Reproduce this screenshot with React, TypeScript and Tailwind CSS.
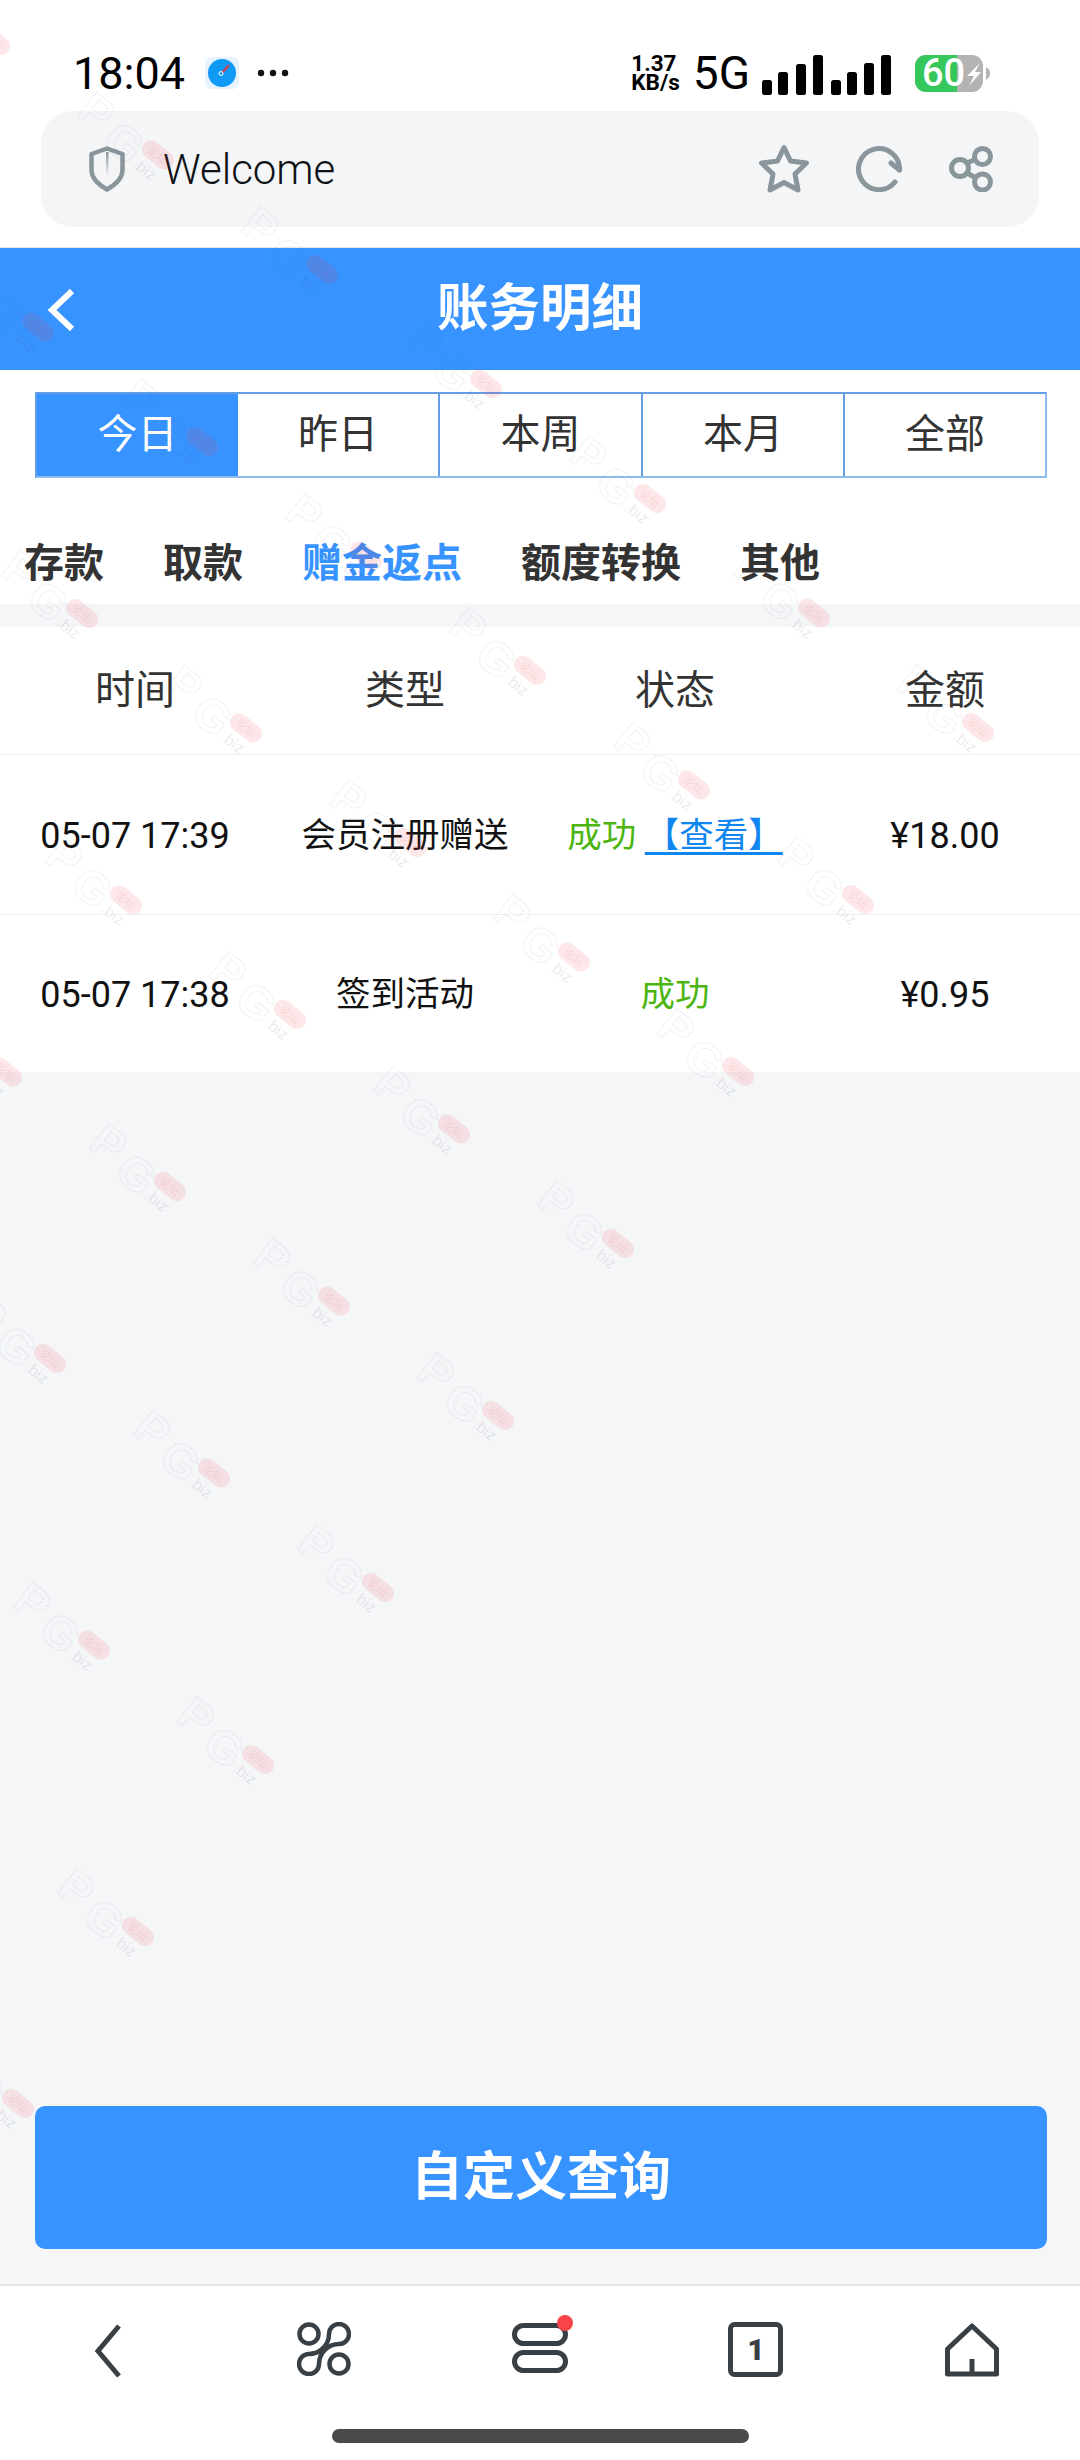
import React from "react";

const wmPoints: { x: number; y: number }[] = [];
for (let j = 0; j <= 8; j++) {
  for (let i = -1; i <= 5; i++) {
    const x = 158 + 164 * i - 120 * j;
    const y = 155 + 114.5 * i + 172 * j;
    if (x > -50 && x < 1130 && y > 0) wmPoints.push({ x, y });
  }
}

function Watermarks() {
  const stroke = "rgba(80,80,120,0.14)";
  return (
    <svg className="absolute left-0 top-0 pointer-events-none" width="1080" height="2460">
      {wmPoints.map((p, k) => (
        <g key={k} transform={`translate(${p.x} ${p.y}) rotate(38)`}>
          <text x="-90" y="20" fontFamily="Liberation Sans" fontWeight="700" fontSize="46" fill="none" stroke={stroke} strokeWidth="1.4" strokeDasharray="1.2 1.2">P</text>
          <text x="-52" y="27" fontFamily="Liberation Sans" fontWeight="700" fontSize="46" fill="none" stroke={stroke} strokeWidth="1.4" strokeDasharray="1.2 1.2">G</text>
          <rect x="-18" y="-9" width="36" height="18" rx="9" fill="rgba(235,60,70,0.12)" />
          <text x="0" y="4" textAnchor="middle" fontFamily="Noto Sans CJK SC" fontSize="11" fill="rgba(235,60,70,0.12)">论坛</text>
          <text x="-14" y="25" fontFamily="Liberation Sans" fontSize="16" fill="rgba(80,80,110,0.12)">.biz</text>
        </g>
      ))}
    </svg>
  );
}

function StatusBar() {
  return (
    <div className="h-[111px] pt-[35px] pl-[73px] pr-[90px] flex items-center justify-between">
      <div className="flex items-center">
        <span className="text-[45px] leading-none font-normal text-black">18:04</span>
        <svg className="ml-[20px]" width="34" height="32" viewBox="0 0 34 32">
          <rect x="0" y="0" width="34" height="32" rx="7" fill="#e6f3fd" />
          <circle cx="17" cy="16" r="14" fill="#0f9bf5" />
          <path d="M24 8 L18 15 L16 17" stroke="#c2455e" strokeWidth="2.5" fill="none" />
          <circle cx="16" cy="16.5" r="2" fill="#0f9bf5" stroke="#fff" strokeWidth="1" />
        </svg>
        <svg className="ml-[18px]" width="32" height="8" viewBox="0 0 32 8">
          <circle cx="4" cy="4" r="3.2" fill="#111" />
          <circle cx="16" cy="4" r="3.2" fill="#111" />
          <circle cx="28" cy="4" r="3.2" fill="#111" />
        </svg>
      </div>
      <div className="flex items-center">
        <div className="text-[22.5px] leading-[19px] font-bold text-black">
          <div>1.37</div>
          <div>KB/s</div>
        </div>
        <span className="ml-[13px] text-[46px] leading-none text-black">5G</span>
        <svg className="ml-[12px] mt-[4px]" width="129" height="40" viewBox="0 0 129 40">
          {[
            [0, 25],
            [16, 17],
            [34, 9],
            [51, 0],
            [69, 25],
            [85, 17],
            [102, 8],
            [119, 0],
          ].map(([x, y]) => (
            <rect key={x} x={x} y={y} width="10" height={40 - y} rx="2.5" fill="#000" />
          ))}
        </svg>
        <svg className="ml-[24px]" width="75" height="37" viewBox="0 0 75 37">
          <rect x="0" y="0" width="68" height="37" rx="11" fill="#b3b3b3" />
          <path d="M11 0 H42 V37 H11 A11 11 0 0 1 0 26 V11 A11 11 0 0 1 11 0 Z" fill="#36c75c" />
          <path d="M71 12 C74 14 75 16 75 18 C75 21 74 23 71 25 Z" fill="#b3b3b3" />
          <text x="7" y="31" fontFamily="Roboto" fontWeight="500" fontSize="38" fill="#fff">60</text>
          <path d="M65 8 L52 21 H59 L54 31 L66 17 H60 Z" fill="#fff" />
        </svg>
      </div>
    </div>
  );
}

function UrlBar() {
  const c = "#8a959c";
  return (
    <div className="mx-[41px] h-[116px] rounded-[32px] bg-[#f4f5f7] flex items-center pl-[48px] pr-[45px]">
      <svg width="36" height="46" viewBox="0 0 36 46">
        <defs>
          <linearGradient id="sh" x1="0" y1="0" x2="0" y2="1">
            <stop offset="0" stopColor={c} />
            <stop offset="1" stopColor={c} stopOpacity="0" />
          </linearGradient>
        </defs>
        <path d="M18 2.5 L33.5 8 V24 C33.5 33 26 39 18 43.5 C10 39 2.5 33 2.5 24 V8 Z" fill="none" stroke={c} strokeWidth="4.5" strokeLinejoin="round" />
        <rect x="17" y="6" width="2.5" height="24" fill="url(#sh)" />
      </svg>
      <span className="ml-[38px] mt-[2px] text-[42px] leading-none font-light text-[#0e1216]">Welcome</span>
      <div className="ml-auto flex items-center">
        <svg width="52" height="50" viewBox="0 0 52 50">
          <path d="M26 3.5 L32.5 17 L48.5 19 L37 30 L40 46 L26 38.5 L12 46 L15 30 L3.5 19 L19.5 17 Z" fill="none" stroke={c} strokeWidth="5" strokeLinejoin="round" />
        </svg>
        <svg className="ml-[46px]" width="46" height="46" viewBox="0 0 46 46">
          <path d="M39 36 A20.5 20.5 0 1 1 43.5 24" fill="none" stroke={c} strokeWidth="5" strokeLinecap="round" />
          <path d="M35 17 L43.5 24" fill="none" stroke={c} strokeWidth="5" strokeLinecap="round" />
        </svg>
        <svg className="ml-[47px]" width="45" height="46" viewBox="0 0 45 46">
          <path d="M18 17 L27 13 M18 27 L27 32" stroke={c} strokeWidth="5" />
          <circle cx="11" cy="22" r="8.5" fill="none" stroke={c} strokeWidth="5" />
          <circle cx="33.5" cy="10.5" r="8" fill="none" stroke={c} strokeWidth="5" />
          <circle cx="33.5" cy="36" r="8" fill="none" stroke={c} strokeWidth="5" />
        </svg>
      </div>
    </div>
  );
}

function Header() {
  return (
    <div className="relative h-[122px] bg-[#3793ff] flex items-center justify-center">
      <svg className="absolute left-[47px] top-[41px]" width="28" height="42" viewBox="0 0 28 42">
        <path d="M25 2 L5 21 L25 40" fill="none" stroke="#fff" strokeWidth="6" />
      </svg>
      <span className="text-[51.5px] leading-none font-bold text-white">账务明细</span>
    </div>
  );
}

function RangeTabs() {
  const items = ["今日", "昨日", "本周", "本月", "全部"];
  return (
    <div className="ml-[35px] mr-[33px] mt-[22px] h-[86px] grid grid-cols-[201px_202px_203px_202px_1fr] border-2 border-[#649fe6] border-b-[#8fbbee] border-r-[#8fbbee]">
      {items.map((t, i) => (
        <div
          key={t}
          className={
            i === 0
              ? "bg-[#3793ff] text-white text-[40px] flex items-center justify-center"
              : i === 4
                ? "text-[#333] text-[40px] flex items-center justify-center"
                : "text-[#333] text-[40px] flex items-center justify-center border-r-2 border-[#649fe6]"
          }
        >
          {t}
        </div>
      ))}
    </div>
  );
}

function SubTabs() {
  const items = ["存款", "取款", "赠金返点", "额度转换", "其他"];
  return (
    <div className="h-[126px] pt-[46px] pl-[24px] flex items-center gap-[59px]">
      {items.map((t) => (
        <span key={t} className={t === "赠金返点" ? "text-[40px] font-bold text-[#3793ff]" : "text-[40px] font-bold text-[#333]"}>
          {t}
        </span>
      ))}
    </div>
  );
}

function Table() {
  return (
    <div className="mt-[23px] bg-white">
      <div className="h-[128px] grid grid-cols-4 items-center text-center text-[40px] text-[#333] border-b border-[#eff0f2]">
        <div>时间</div>
        <div>类型</div>
        <div>状态</div>
        <div>金额</div>
      </div>
      <div className="h-[160px] pt-[3px] grid grid-cols-4 items-center text-center text-[34.5px] text-[#111] border-b border-[#eff0f2]">
        <div className="text-[36px]">05-07 17:39</div>
        <div>会员注册赠送</div>
        <div className="whitespace-nowrap">
          <span className="text-[#4cb50f]">成功</span>{" "}
          <span className="text-[#0f86f0] underline decoration-[3px] underline-offset-[5px]">【查看】</span>
        </div>
        <div className="text-[36px]">¥18.00</div>
      </div>
      <div className="h-[157px] pt-[3px] grid grid-cols-4 items-center text-center text-[34.5px] text-[#111]">
        <div className="text-[36px]">05-07 17:38</div>
        <div>签到活动</div>
        <div className="text-[#4cb50f]">成功</div>
        <div className="text-[36px]">¥0.95</div>
      </div>
    </div>
  );
}

function BottomNav() {
  const c = "#384046";
  return (
    <div className="h-[176px] bg-white border-t-2 border-[#e3e5e7] flex flex-col items-center">
      <div className="w-full h-[143px] pt-[36px] grid grid-cols-5 justify-items-center items-start">
        <svg className="mt-[2px]" width="28" height="54" viewBox="0 0 28 54">
          <path d="M25 2 L4 27 L25 52" fill="none" stroke={c} strokeWidth="5" />
        </svg>
        <svg width="54" height="54" viewBox="0 0 54 54">
          <g fill="none" stroke={c} strokeWidth="4.5">
            <circle cx="12" cy="12" r="9.5" />
            <circle cx="42" cy="42" r="9.5" />
            <path d="M32 12 A10 10 0 1 1 42 22 C32 22 22 30 22 42 A10 10 0 1 1 12 32 C22 32 32 24 32 12 Z" />
          </g>
        </svg>
        <svg className="mt-[-6px] overflow-visible" width="56" height="56" viewBox="0 0 56 56">
          <rect x="2.5" y="9.5" width="51" height="18" rx="9" fill="none" stroke={c} strokeWidth="5" />
          <rect x="2.5" y="36.5" width="51" height="18" rx="9" fill="none" stroke={c} strokeWidth="5" />
          <circle cx="53" cy="7" r="8" fill="#f9444a" />
        </svg>
        <svg width="56" height="56" viewBox="0 0 56 56">
          <rect x="2.5" y="2.5" width="50" height="50" rx="4" fill="none" stroke={c} strokeWidth="5" />
          <text x="28" y="38" textAnchor="middle" fontFamily="Roboto" fontWeight="900" fontSize="30" fill={c}>1</text>
        </svg>
        <svg className="mt-[1px]" width="54" height="54" viewBox="0 0 54 54">
          <path d="M27 3 L51.5 26 V51 H2.5 V26 Z" fill="none" stroke={c} strokeWidth="5" strokeLinejoin="round" />
          <path d="M27 36 V51" fill="none" stroke={c} strokeWidth="5" />
        </svg>
      </div>
      <div className="w-[417px] h-[14px] rounded-full bg-[#4a4a4a]" />
    </div>
  );
}

export default function App() {
  return (
    <div className="relative w-[1080px] h-[2460px] overflow-hidden bg-[#f5f6f8] flex flex-col font-[Roboto,'Noto_Sans_CJK_SC',sans-serif]">
      <div className="h-[248px] bg-white border-b border-[#e5e7e8]">
        <StatusBar />
        <UrlBar />
      </div>
      <Header />
      <div className="bg-white h-[234px]">
        <RangeTabs />
        <SubTabs />
      </div>
      <Table />
      <div className="flex-1" />
      <button className="ml-[35px] mr-[33px] mb-[35px] h-[143px] rounded-[10px] bg-[#3793ff] text-white text-[52px] font-bold">自定义查询</button>
      <BottomNav />
      <Watermarks />
    </div>
  );
}
